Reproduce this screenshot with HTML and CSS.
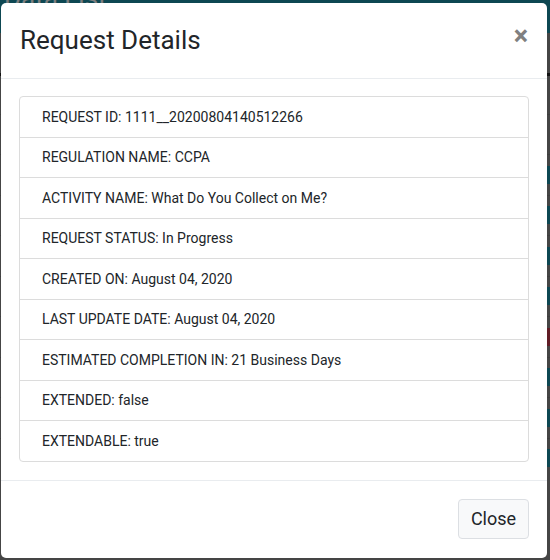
FILE: index.html
```html
<!DOCTYPE html>
<html>
<head>
<meta charset="utf-8">
<link rel="stylesheet" href="styles.css">
</head>
<body>
<div class="page">
  <div class="topbar"><span class="topbar-title">Data List</span></div>
  <div class="rows">
    <div class="row"><span class="btn-bg dark"></span></div>
    <div class="row"><span class="btn-bg dark"></span></div>
    <div class="row"><span class="btn-bg"></span></div>
    <div class="row"><span class="btn-bg"></span></div>
    <div class="row"><span class="btn-bg"></span></div>
    <div class="row"><span class="btn-bg"></span></div>
    <div class="row"><span class="btn-bg red"></span></div>
    <div class="row"><span class="btn-bg"></span></div>
    <div class="row"><span class="btn-bg"></span></div>
    <div class="row"><span class="btn-bg"></span></div>
  </div>
</div>
<div class="backdrop"></div>
<div class="modal">
  <div class="modal-header">
    <h5 class="modal-title">Request Details</h5>
    <button class="close" type="button">&times;</button>
  </div>
  <div class="modal-body">
    <ul class="list-group">
      <li class="list-group-item">REQUEST ID: 1111__20200804140512266</li>
      <li class="list-group-item">REGULATION NAME: CCPA</li>
      <li class="list-group-item">ACTIVITY NAME: What Do You Collect on Me?</li>
      <li class="list-group-item">REQUEST STATUS: In Progress</li>
      <li class="list-group-item">CREATED ON: August 04, 2020</li>
      <li class="list-group-item">LAST UPDATE DATE: August 04, 2020</li>
      <li class="list-group-item">ESTIMATED COMPLETION IN: 21 Business Days</li>
      <li class="list-group-item">EXTENDED: false</li>
      <li class="list-group-item">EXTENDABLE: true</li>
    </ul>
  </div>
  <div class="modal-footer">
    <button class="btn-close" type="button">Close</button>
  </div>
</div>
</body>
</html>
```
FILE: styles.css
```css
* { box-sizing: border-box; }
html, body { margin: 0; padding: 0; }
body {
  width: 550px;
  height: 560px;
  overflow: hidden;
  font-family: Roboto, "Liberation Sans", sans-serif;
  background: #8a8a8a;
  position: relative;
}
.page {
  width: 550px;
  height: 560px;
  display: flex;
  flex-direction: column;
}
.topbar {
  height: 33px;
  background: #1b8ea5;
  padding-left: 4px;
  display: flex;
  align-items: flex-start;
}
.topbar-title {
  color: #fff;
  font-size: 26px;
  line-height: 20px;
  margin-top: -12px;
}
.rows {
  display: flex;
  flex-direction: column;
  padding-top: 40px;
  align-items: flex-end;
}
.row {
  height: 40.5px;
  width: 100%;
  border-top: 1px solid #7a7a7a;
  display: flex;
  justify-content: flex-end;
  align-items: center;
}
.row:first-child { border-top: 3px solid #222; }
.btn-bg {
  width: 40px;
  height: 18px;
  background: #1b8ea5;
  margin-right: -20px;
}
.btn-bg.dark { background: #8a8a8a; }
.btn-bg.red { background: #c0394a; }
.backdrop {
  position: absolute;
  inset: 0;
  background: rgba(0, 0, 0, 0.5);
}
.modal {
  position: absolute;
  left: 1px;
  top: 3px;
  width: 546px;
  background: #fff;
  border-radius: 5px;
  display: flex;
  flex-direction: column;
}
.modal-header {
  display: flex;
  justify-content: space-between;
  align-items: flex-start;
  padding: 18px 19px 18px 19px;
  border-bottom: 1px solid #e9ecef;
  height: 76px;
}
.modal-title {
  margin: 0;
  font-size: 26px;
  font-weight: 400;
  line-height: 38px;
  color: #212529;
}
.close {
  border: 0;
  background: transparent;
  padding: 0;
  margin-top: -2px;
  font-family: Roboto, "Liberation Sans", sans-serif;
  font-size: 27px;
  font-weight: 700;
  line-height: 34px;
  color: #808080;
  margin-right: 0;
}
.modal-body {
  padding: 17px 18px 18px 18px;
}
.list-group {
  list-style: none;
  margin: 0;
  padding: 0;
  border: 1px solid #dcdcdc;
  border-radius: 4px;
}
.list-group-item {
  font-size: 14px;
  line-height: 21px;
  padding: 9.5px 22px 9.5px 22px;
  color: #212529;
  border-top: 1px solid #dcdcdc;
  height: 40.5px;
}
.list-group-item:first-child { border-top: 0; height: 39.5px; }
.modal-footer {
  border-top: 1px solid #e9ecef;
  padding: 18px 18px 19px 18px;
  display: flex;
  justify-content: flex-end;
}
.btn-close {
  font-family: Roboto, "Liberation Sans", sans-serif;
  font-size: 18px;
  line-height: 24px;
  height: 40px;
  width: 71px;
  padding: 0;
  color: #212529;
  background: #f8f9fa;
  border: 1px solid #dcdfe3;
  border-radius: 4px;
}
```
